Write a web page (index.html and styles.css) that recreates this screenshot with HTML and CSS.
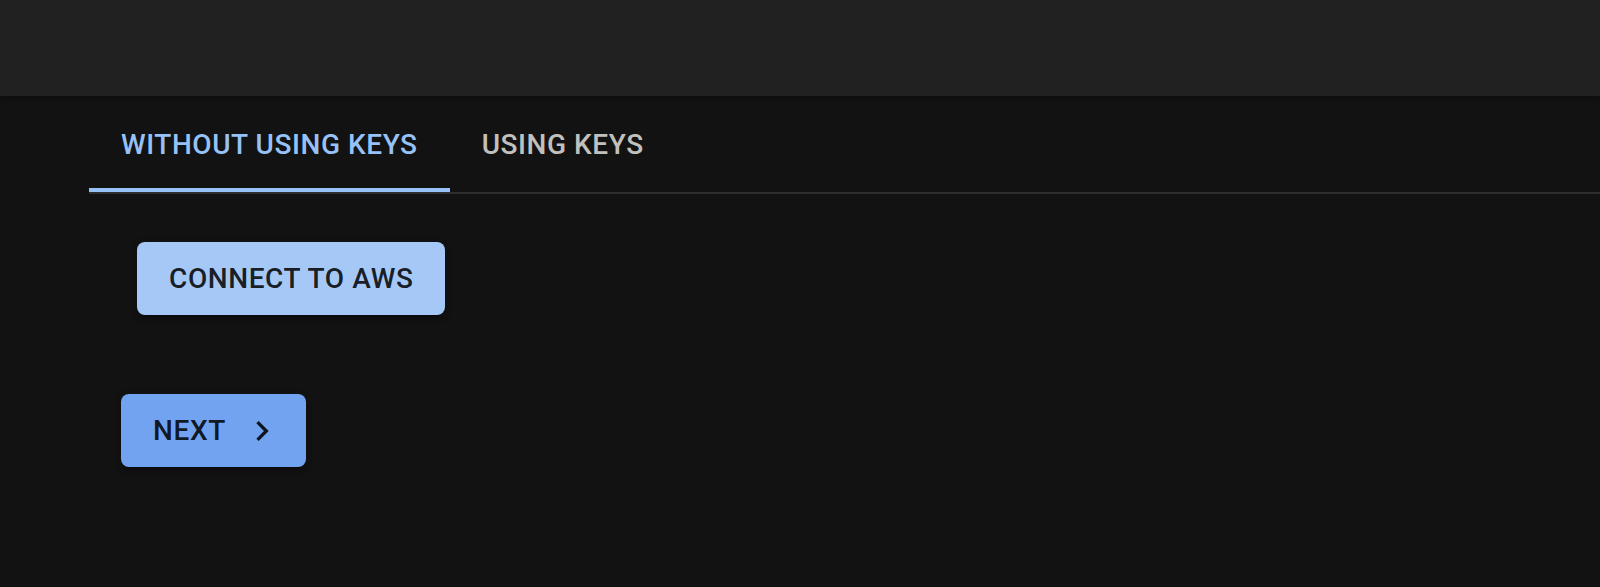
FILE: index.html
```html
<!DOCTYPE html>
<html lang="en">
<head>
<meta charset="utf-8">
<title>Connect</title>
<link rel="stylesheet" href="styles.css">
</head>
<body>
<header class="appbar"></header>
<main class="content">
  <div class="tabs">
    <button class="tab tab-active">WITHOUT USING KEYS<span class="indicator"></span></button>
    <button class="tab">USING KEYS</button>
  </div>
  <div class="panel">
    <button class="btn btn-light">CONNECT TO AWS</button>
  </div>
  <div class="actions">
    <button class="btn btn-primary">NEXT
      <svg class="end-icon" viewBox="0 0 24 24" aria-hidden="true"><path d="M10 6 8.59 7.41 13.17 12l-4.58 4.59L10 18l6-6z"/></svg>
    </button>
  </div>
</main>
</body>
</html>
```

FILE: styles.css
```css
* { box-sizing: border-box; }
html, body { margin: 0; padding: 0; }
body {
  background: #121212;
  height: 587px;
  overflow: hidden;
  font-family: Roboto, "Liberation Sans", sans-serif;
}
.appbar {
  height: 96px;
  background: #212121;
  box-shadow: 0 2px 6px rgba(0,0,0,0.35);
  position: relative;
  z-index: 1;
}
.content {
  padding-left: 89px;
}
.tabs {
  display: flex;
  border-bottom: 2px solid #2e2e2e;
}
.tab {
  position: relative;
  min-height: 96px;
  min-width: 180px;
  padding: 24px 32px;
  background: none;
  border: 0;
  font-family: inherit;
  font-weight: 500;
  font-size: 28px;
  line-height: 1.25;
  letter-spacing: 0.56px;
  color: #c2c0bd;
  display: flex;
  align-items: center;
  justify-content: center;
}
.tab-active { color: #96c2f7; }
.indicator {
  position: absolute;
  left: 0;
  right: 0;
  bottom: 0;
  height: 4px;
  background: #96c2f7;
}
.panel {
  padding: 48px;
}
.actions {
  padding-left: 32px;
  margin-top: 31px;
}
.btn {
  display: inline-flex;
  align-items: center;
  padding: 12px 32px;
  border: 0;
  border-radius: 8px;
  font-family: inherit;
  font-weight: 500;
  font-size: 28px;
  line-height: 1.75;
  letter-spacing: 0.6px;
  color: rgba(0,0,0,0.87);
  box-shadow: 0 6px 2px -4px rgba(0,0,0,0.2), 0 4px 4px 0 rgba(0,0,0,0.14), 0 2px 10px 0 rgba(0,0,0,0.12);
}
.btn-light { background: #a6c8f6; }
.btn-primary { background: #72a3f0; }
.end-icon {
  width: 40px;
  height: 40px;
  margin-left: 16px;
  margin-right: -8px;
  fill: rgba(0,0,0,0.87);
}
```
